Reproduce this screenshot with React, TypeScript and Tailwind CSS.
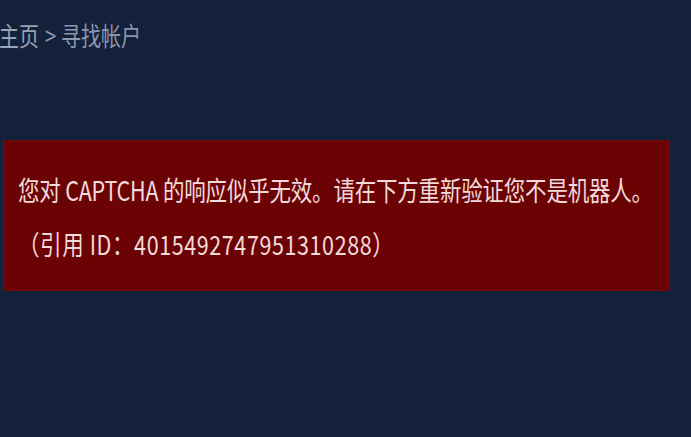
import React from "react";

export default function App() {
  const font = { fontFamily: '"Noto Sans CJK SC", "Noto Sans", sans-serif' };
  return (
    <div
      className="w-[691px] h-[437px] overflow-hidden bg-[#13213b] flex flex-col"
      style={font}
    >
      <div className="pt-[14px] flex items-center text-[20px] leading-[26px] text-[#8e97aa] [transform:scaleY(1.3)] origin-top">
        <span className="-ml-[1px] text-[#9aa2b4]">主页</span>
        <span className="ml-[6px] mr-[5px]">&gt;</span>
        <span>寻找帐户</span>
      </div>
      <div className="mt-[100px] ml-[3px] w-[666px] h-[151px] bg-[#6b0305] border border-[#7a0a0c] flex flex-col pl-[14px] pt-[34px] text-[#f3dada]">
        <div className="text-[21.5px] leading-[24px] tracking-[-0.2px] [transform:scaleY(1.25)] origin-top whitespace-nowrap">
          您对 CAPTCHA 的响应似乎无效。请在下方重新验证您不是机器人。
        </div>
        <div className="mt-[30px] text-[21.5px] leading-[24px] tracking-[0.6px] [transform:scaleY(1.25)] origin-top whitespace-nowrap">
          （引用 ID：4015492747951310288）
        </div>
      </div>
    </div>
  );
}
